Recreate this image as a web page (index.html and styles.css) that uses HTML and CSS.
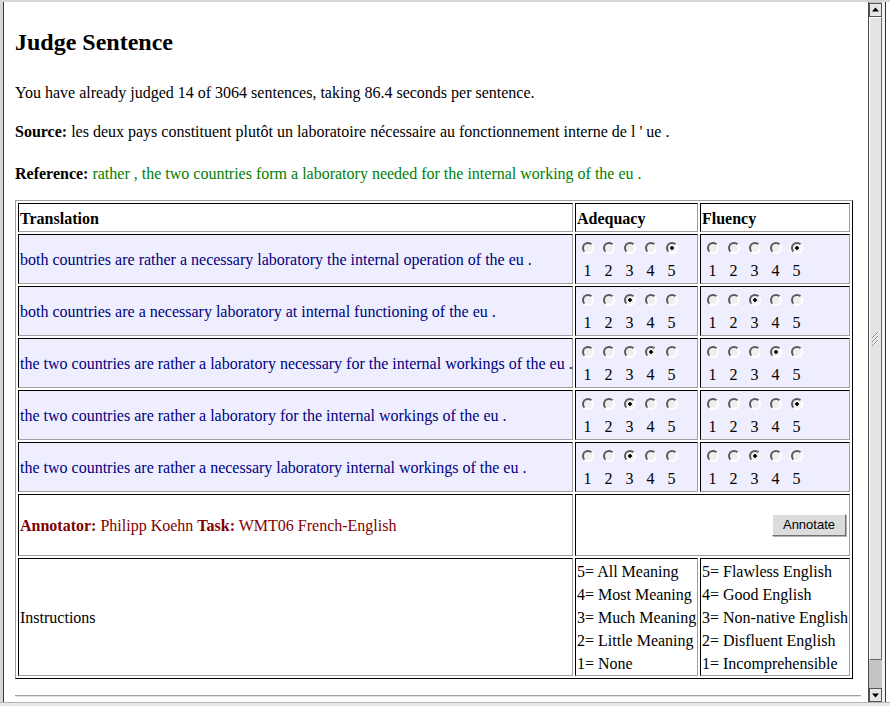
FILE: index.html
```html
<!DOCTYPE html>
<html>
<head>
<meta charset="utf-8">
<title>Judge Sentence</title>
<link rel="stylesheet" href="styles.css">
</head>
<body>
<div class="window">
  <div class="viewport">
    <div class="page">
      <h1 class="title">Judge Sentence</h1>
      <p class="progress">You have already judged 14 of 3064 sentences, taking 86.4 seconds per sentence.</p>
      <p class="source"><b>Source:</b> les deux pays constituent plutôt un laboratoire nécessaire au fonctionnement interne de l ' ue .</p>
      <p class="reference"><b>Reference:</b> <span class="ref-text">rather , the two countries form a laboratory needed for the internal working of the eu .</span></p>
      <table class="judge">
        <tr>
          <th class="h-trans">Translation</th>
          <th class="h-adeq">Adequacy</th>
          <th class="h-flu">Fluency</th>
        </tr>
        <tr class="sent">
          <td class="trans">both countries are rather a necessary laboratory the internal operation of the eu .</td>
          <td><div class="scale"><input class="radio" type="radio" name="a1"><input class="radio" type="radio" name="a1"><input class="radio" type="radio" name="a1"><input class="radio" type="radio" name="a1"><input class="radio" type="radio" name="a1" checked><span>1</span><span>2</span><span>3</span><span>4</span><span>5</span></div></td>
          <td><div class="scale"><input class="radio" type="radio" name="f1"><input class="radio" type="radio" name="f1"><input class="radio" type="radio" name="f1"><input class="radio" type="radio" name="f1"><input class="radio" type="radio" name="f1" checked><span>1</span><span>2</span><span>3</span><span>4</span><span>5</span></div></td>
        </tr>
        <tr class="sent">
          <td class="trans">both countries are a necessary laboratory at internal functioning of the eu .</td>
          <td><div class="scale"><input class="radio" type="radio" name="a2"><input class="radio" type="radio" name="a2"><input class="radio" type="radio" name="a2" checked><input class="radio" type="radio" name="a2"><input class="radio" type="radio" name="a2"><span>1</span><span>2</span><span>3</span><span>4</span><span>5</span></div></td>
          <td><div class="scale"><input class="radio" type="radio" name="f2"><input class="radio" type="radio" name="f2"><input class="radio" type="radio" name="f2" checked><input class="radio" type="radio" name="f2"><input class="radio" type="radio" name="f2"><span>1</span><span>2</span><span>3</span><span>4</span><span>5</span></div></td>
        </tr>
        <tr class="sent">
          <td class="trans">the two countries are rather a laboratory necessary for the internal workings of the eu .</td>
          <td><div class="scale"><input class="radio" type="radio" name="a3"><input class="radio" type="radio" name="a3"><input class="radio" type="radio" name="a3"><input class="radio" type="radio" name="a3" checked><input class="radio" type="radio" name="a3"><span>1</span><span>2</span><span>3</span><span>4</span><span>5</span></div></td>
          <td><div class="scale"><input class="radio" type="radio" name="f3"><input class="radio" type="radio" name="f3"><input class="radio" type="radio" name="f3"><input class="radio" type="radio" name="f3" checked><input class="radio" type="radio" name="f3"><span>1</span><span>2</span><span>3</span><span>4</span><span>5</span></div></td>
        </tr>
        <tr class="sent">
          <td class="trans">the two countries are rather a laboratory for the internal workings of the eu .</td>
          <td><div class="scale"><input class="radio" type="radio" name="a4"><input class="radio" type="radio" name="a4"><input class="radio" type="radio" name="a4" checked><input class="radio" type="radio" name="a4"><input class="radio" type="radio" name="a4"><span>1</span><span>2</span><span>3</span><span>4</span><span>5</span></div></td>
          <td><div class="scale"><input class="radio" type="radio" name="f4"><input class="radio" type="radio" name="f4"><input class="radio" type="radio" name="f4"><input class="radio" type="radio" name="f4"><input class="radio" type="radio" name="f4" checked><span>1</span><span>2</span><span>3</span><span>4</span><span>5</span></div></td>
        </tr>
        <tr class="sent">
          <td class="trans">the two countries are rather a necessary laboratory internal workings of the eu .</td>
          <td><div class="scale"><input class="radio" type="radio" name="a5"><input class="radio" type="radio" name="a5"><input class="radio" type="radio" name="a5" checked><input class="radio" type="radio" name="a5"><input class="radio" type="radio" name="a5"><span>1</span><span>2</span><span>3</span><span>4</span><span>5</span></div></td>
          <td><div class="scale"><input class="radio" type="radio" name="f5"><input class="radio" type="radio" name="f5"><input class="radio" type="radio" name="f5" checked><input class="radio" type="radio" name="f5"><input class="radio" type="radio" name="f5"><span>1</span><span>2</span><span>3</span><span>4</span><span>5</span></div></td>
        </tr>
        <tr class="meta">
          <td><div class="meta-box annot"><span><b>Annotator:</b> Philipp Koehn <b>Task:</b> WMT06 French-English</span></div></td>
          <td colspan="2"><div class="meta-box submit"><button class="btn" type="button">Annotate</button></div></td>
        </tr>
        <tr class="instr">
          <td class="instr-label">Instructions</td>
          <td class="instr-list">5= All Meaning<br>4= Most Meaning<br>3= Much Meaning<br>2= Little Meaning<br>1= None</td>
          <td class="instr-list">5= Flawless English<br>4= Good English<br>3= Non-native English<br>2= Disfluent English<br>1= Incomprehensible</td>
        </tr>
      </table>
      <hr class="rule">
    </div>
  </div>
  <div class="scrollbar">
    <div class="sb-btn"><svg width="11" height="12" viewBox="0 0 11 12"><path d="M5.5 3.5 L9 7.5 L2 7.5 Z" fill="#000"/></svg></div>
    <div class="sb-thumb"><svg width="11" height="18" viewBox="0 0 11 18"><path d="M2 8 L8 2 M2 12 L8 6 M2 16 L8 10" stroke="#8a8a8a" stroke-width="1" fill="none"/><path d="M3 8 L9 2 M3 12 L9 6 M3 16 L9 10" stroke="#fff" stroke-width="1" fill="none"/></svg></div>
    <div class="sb-trough"></div>
    <div class="sb-btn"><svg width="11" height="12" viewBox="0 0 11 12"><path d="M5.5 8.5 L9 4.5 L2 4.5 Z" fill="#000"/></svg></div>
  </div>
  <div class="sb-gap"></div>
  <div class="otherwin"></div>
</div>
<div class="status"></div>
</body>
</html>
```

FILE: styles.css
```css
html, body {
  margin: 0;
  padding: 0;
  width: 890px;
  height: 706px;
  overflow: hidden;
  background: #d6d6d6;
}

body {
  font-family: "Liberation Serif", "Times New Roman", serif;
  font-size: 16px;
  line-height: 23px;
  color: #000;
}

.window {
  display: flex;
  height: 702px;
  box-sizing: border-box;
  border-top: 2px solid #d6d6d6;
  border-left: 3px solid #d6d6d6;
}

.viewport {
  flex: 1;
  min-width: 0;
  background: #fff;
  border-left: 1px solid #3a3a3a;
  overflow: hidden;
}

.page {
  padding: 26px 0 0 11px;
}

.title {
  margin: 0 0 25px;
  font-size: 24px;
  line-height: 28px;
  font-weight: bold;
}

.progress {
  margin: 0 0 16px;
}

.source {
  margin: 0 0 19px;
}

.reference {
  margin: 0 0 15px;
}

.ref-text {
  color: #008000;
}

.judge {
  border-collapse: separate;
  border-spacing: 2px;
  table-layout: fixed;
  width: 838px;
  border: 1px solid;
  border-color: #a0a0a0 #000 #000 #a0a0a0;
}

.judge th,
.judge td {
  box-sizing: border-box;
  border: 1px solid;
  border-color: #000 #a0a0a0 #a0a0a0 #000;
  padding: 1px;
  text-align: left;
  vertical-align: middle;
  white-space: nowrap;
}

.judge th {
  font-weight: bold;
  padding-top: 3px;
}

.h-trans { width: 555px; }
.h-adeq { width: 123px; }
.h-flu { width: 150px; }

.sent td {
  background: #eeeeff;
}

.trans {
  color: #000080;
}

.scale {
  display: grid;
  grid-template-columns: repeat(5, 21px);
  grid-template-rows: 23px 23px;
  align-items: center;
  justify-items: center;
}

.radio {
  -webkit-appearance: none;
  appearance: none;
  margin: 0 0 0 1px;
  width: 12px;
  height: 12px;
  box-sizing: border-box;
  border-radius: 50%;
  border: 2px solid;
  border-color: #5a5a5a #ffffff #ffffff #5a5a5a;
  background: #efefef;
}

.radio:checked {
  background: radial-gradient(circle at 50% 50%, #000 0, #000 1.5px, #efefef 2px);
}

.meta-box {
  height: 58px;
  display: flex;
  align-items: center;
}

.annot {
  color: #800000;
}

.submit {
  justify-content: flex-end;
  padding-right: 2px;
}

.btn {
  font-family: "Liberation Sans", Arial, sans-serif;
  font-size: 13px;
  line-height: 16px;
  color: #000;
  width: 74px;
  height: 22px;
  padding: 0;
  margin: 0;
  box-sizing: border-box;
  background: #dcdcdc;
  border: 1px solid;
  border-color: #fff #707070 #707070 #fff;
  box-shadow: 1px 1px 0 #b0b0b0;
  border-radius: 0;
}

.instr td {
  padding: 1px 1px 0;
}

.instr-label {
  color: #000;
}

.rule {
  margin: 16px 7px 0 0;
  height: 0;
  border: 0;
  border-top: 1px solid #a0a0a0;
  border-bottom: 1px solid #e4e4e4;
}

.scrollbar {
  width: 13px;
  border-left: 1px solid #4a4a4a;
  display: flex;
  flex-direction: column;
  padding-top: 1px;
  background: #c4c4c4;
}

.sb-btn {
  height: 14px;
  box-sizing: border-box;
  border: 1px solid #555;
  background: #e6e6e6;
  display: flex;
  align-items: center;
  justify-content: center;
}

.sb-btn svg {
  display: block;
}

.sb-thumb {
  height: 643px;
  box-sizing: border-box;
  background: #e4e4e4;
  border: 1px solid;
  border-color: #fff #6a6a6a #6a6a6a #fff;
  display: flex;
  align-items: center;
  justify-content: center;
}

.sb-trough {
  flex: 1;
  background: #c4c4c4;
}

.sb-gap {
  width: 3px;
  background: #f2f2f2;
}

.otherwin {
  width: 4px;
  background: #fff;
  border-left: 1px solid #333;
}

.status {
  height: 4px;
  box-sizing: border-box;
  border-top: 1px solid #b4b4b4;
  background: #e8e8e8;
}
```
